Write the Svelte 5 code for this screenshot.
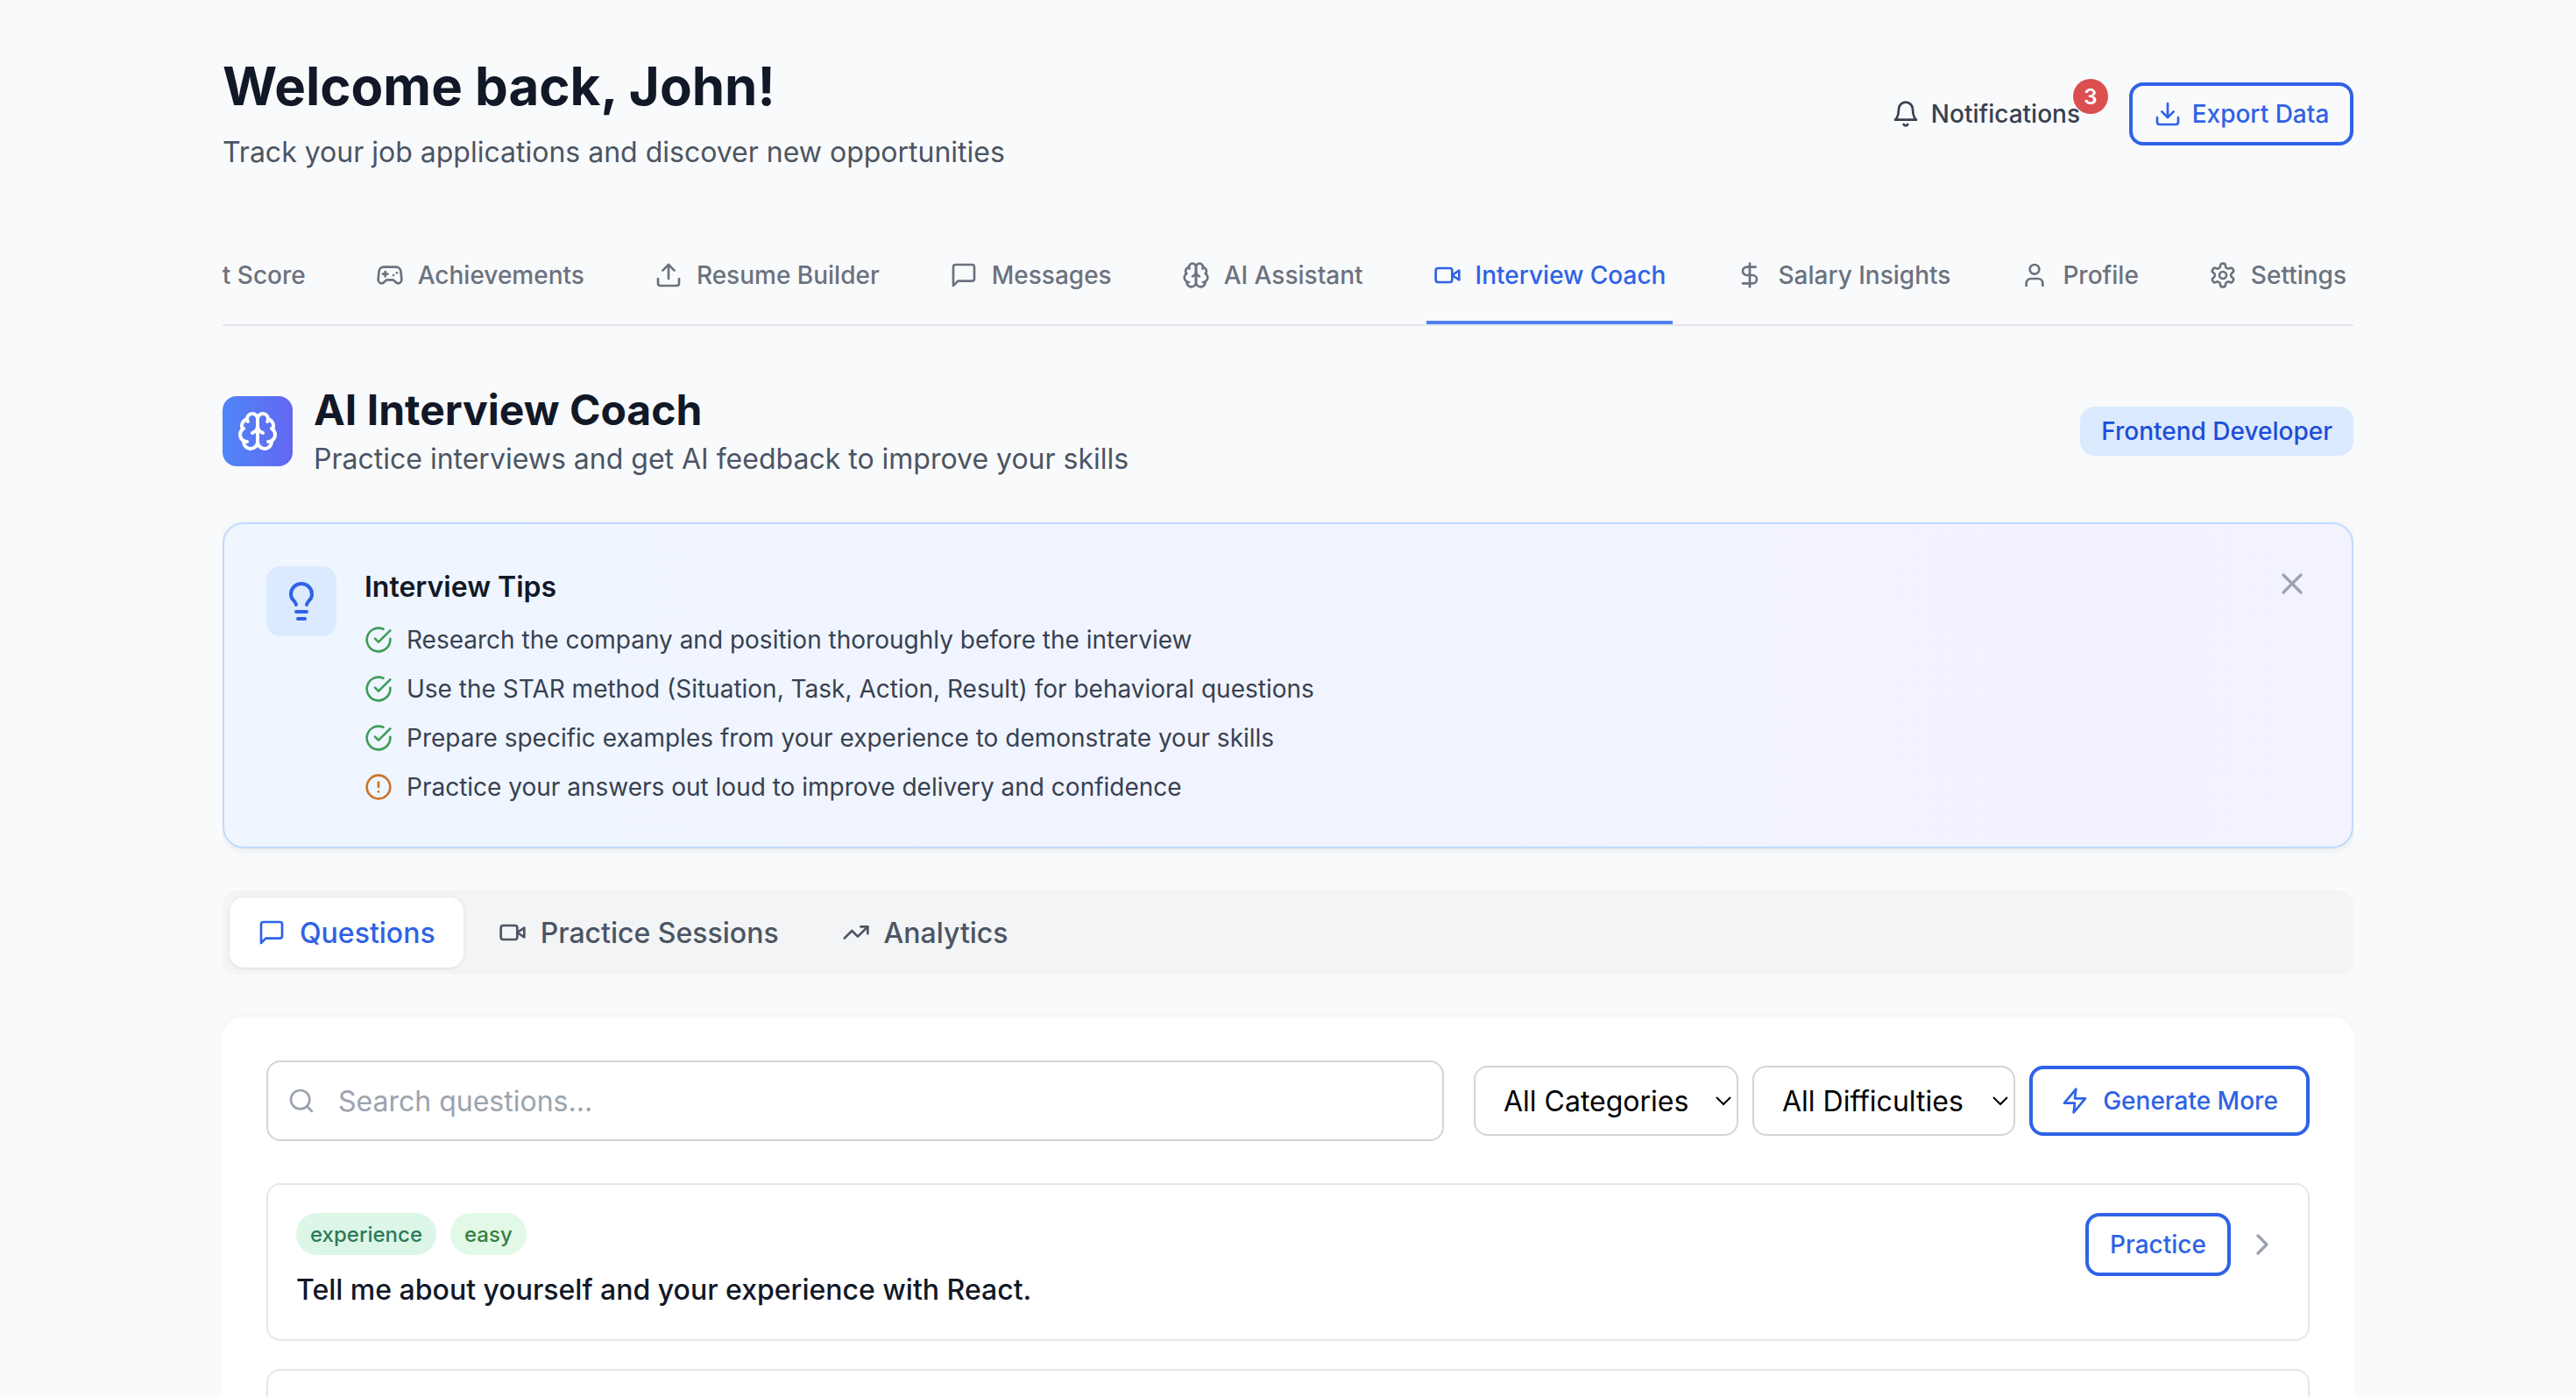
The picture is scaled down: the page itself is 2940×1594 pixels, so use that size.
<script>
  const icons = {
    bell: '<path d="M6 8a6 6 0 0 1 12 0c0 7 3 9 3 9H3s3-2 3-9"/><path d="M10.3 21a1.94 1.94 0 0 0 3.4 0"/>',
    download: '<path d="M21 15v4a2 2 0 0 1-2 2H5a2 2 0 0 1-2-2v-4"/><polyline points="7 10 12 15 17 10"/><line x1="12" y1="15" x2="12" y2="3"/>',
    upload: '<path d="M21 15v4a2 2 0 0 1-2 2H5a2 2 0 0 1-2-2v-4"/><polyline points="17 8 12 3 7 8"/><line x1="12" y1="3" x2="12" y2="15"/>',
    message: '<path d="M21 15a2 2 0 0 1-2 2H7l-4 4V5a2 2 0 0 1 2-2h14a2 2 0 0 1 2 2z"/>',
    gamepad: '<line x1="6" y1="11" x2="10" y2="11"/><line x1="8" y1="9" x2="8" y2="13"/><line x1="15" y1="12" x2="15.01" y2="12"/><line x1="18" y1="10" x2="18.01" y2="10"/><path d="M17.32 5H6.68a4 4 0 0 0-3.978 3.59c-.006.052-.01.101-.017.152C2.604 9.416 2 14.456 2 16a3 3 0 0 0 3 3c1 0 1.5-.5 2-1l1.414-1.414A2 2 0 0 1 9.828 16h4.344a2 2 0 0 1 1.414.586L17 18c.5.5 1 1 2 1a3 3 0 0 0 3-3c0-1.545-.604-6.584-.685-7.258-.007-.05-.011-.1-.017-.151A4 4 0 0 0 17.32 5z"/>',
    brain: '<path d="M12 5a3 3 0 1 0-5.997.125 4 4 0 0 0-2.526 5.77 4 4 0 0 0 .556 6.588A4 4 0 1 0 12 18Z"/><path d="M12 5a3 3 0 1 1 5.997.125 4 4 0 0 1 2.526 5.77 4 4 0 0 1-.556 6.588A4 4 0 1 1 12 18Z"/><path d="M15 13a4.5 4.5 0 0 1-3-4 4.5 4.5 0 0 1-3 4"/><path d="M17.599 6.5a3 3 0 0 0 .399-1.375"/><path d="M6.003 5.125A3 3 0 0 0 6.401 6.5"/><path d="M3.477 10.896a4 4 0 0 1 .585-.396"/><path d="M19.938 10.5a4 4 0 0 1 .585.396"/><path d="M6 18a4 4 0 0 1-1.967-.516"/><path d="M19.967 17.484A4 4 0 0 1 18 18"/>',
    video: '<path d="m22 8-6 4 6 4V8Z"/><rect x="2" y="6" width="14" height="12" rx="2"/>',
    dollar: '<line x1="12" y1="2" x2="12" y2="22"/><path d="M17 5H9.5a3.5 3.5 0 0 0 0 7h5a3.5 3.5 0 0 1 0 7H6"/>',
    user: '<path d="M19 21v-2a4 4 0 0 0-4-4H9a4 4 0 0 0-4 4v2"/><circle cx="12" cy="7" r="4"/>',
    settings: '<path d="M12.22 2h-.44a2 2 0 0 0-2 2v.18a2 2 0 0 1-1 1.73l-.43.25a2 2 0 0 1-2 0l-.15-.08a2 2 0 0 0-2.73.73l-.22.38a2 2 0 0 0 .73 2.73l.15.1a2 2 0 0 1 1 1.72v.51a2 2 0 0 1-1 1.74l-.15.09a2 2 0 0 0-.73 2.73l.22.38a2 2 0 0 0 2.73.73l.15-.08a2 2 0 0 1 2 0l.43.25a2 2 0 0 1 1 1.73V20a2 2 0 0 0 2 2h.44a2 2 0 0 0 2-2v-.18a2 2 0 0 1 1-1.73l.43-.25a2 2 0 0 1 2 0l.15.08a2 2 0 0 0 2.73-.73l.22-.39a2 2 0 0 0-.73-2.73l-.15-.08a2 2 0 0 1-1-1.74v-.5a2 2 0 0 1 1-1.74l.15-.09a2 2 0 0 0 .73-2.73l-.22-.38a2 2 0 0 0-2.73-.73l-.15.08a2 2 0 0 1-2 0l-.43-.25a2 2 0 0 1-1-1.73V4a2 2 0 0 0-2-2z"/><circle cx="12" cy="12" r="3"/>',
    bulb: '<path d="M15 14c.2-1 .7-1.7 1.5-2.5 1-.9 1.5-2.2 1.5-3.5A6 6 0 0 0 6 8c0 1 .2 2.2 1.5 3.5.7.7 1.3 1.5 1.5 2.5"/><path d="M9 18h6"/><path d="M10 22h4"/>',
    check: '<path d="M22 11.08V12a10 10 0 1 1-5.93-9.14"/><polyline points="22 4 12 14.01 9 11.01"/>',
    alert: '<circle cx="12" cy="12" r="10"/><line x1="12" y1="8" x2="12" y2="12"/><line x1="12" y1="16" x2="12.01" y2="16"/>',
    x: '<path d="M18 6 6 18"/><path d="m6 6 12 12"/>',
    trend: '<polyline points="22 7 13.5 15.5 8.5 10.5 2 17"/><polyline points="16 7 22 7 22 13"/>',
    search: '<circle cx="11" cy="11" r="8"/><path d="m21 21-4.3-4.3"/>',
    zap: '<polygon points="13 2 3 14 12 14 11 22 21 10 12 10 13 2"/>',
    chevron: '<path d="m9 18 6-6-6-6"/>'
  };

  const navTabs = [
    { label: 'Talent Score', icon: 'trend' },
    { label: 'Achievements', icon: 'gamepad' },
    { label: 'Resume Builder', icon: 'upload' },
    { label: 'Messages', icon: 'message' },
    { label: 'AI Assistant', icon: 'brain' },
    { label: 'Interview Coach', icon: 'video', active: true },
    { label: 'Salary Insights', icon: 'dollar' },
    { label: 'Profile', icon: 'user' },
    { label: 'Settings', icon: 'settings' }
  ];

  const tips = [
    { text: 'Research the company and position thoroughly before the interview', icon: 'check', tone: 'ok' },
    { text: 'Use the STAR method (Situation, Task, Action, Result) for behavioral questions', icon: 'check', tone: 'ok' },
    { text: 'Prepare specific examples from your experience to demonstrate your skills', icon: 'check', tone: 'ok' },
    { text: 'Practice your answers out loud to improve delivery and confidence', icon: 'alert', tone: 'warn' }
  ];

  const subTabs = [
    { label: 'Questions', icon: 'message', active: true },
    { label: 'Practice Sessions', icon: 'video' },
    { label: 'Analytics', icon: 'trend' }
  ];
</script>

{#snippet icon(name, cls)}
  <svg class={cls} viewBox="0 0 24 24" fill="none" stroke="currentColor" stroke-width="2" stroke-linecap="round" stroke-linejoin="round">{@html icons[name]}</svg>
{/snippet}

<div class="page">
  <header class="top">
    <div>
      <h1>Welcome back, John!</h1>
      <p class="lead">Track your job applications and discover new opportunities</p>
    </div>
    <div class="top-actions">
      <button class="notif">
        {@render icon('bell', 'i32')}
        <span>Notifications</span>
        <span class="badge">3</span>
      </button>
      <button class="outline export">
        {@render icon('download', 'i32')}
        Export Data
      </button>
    </div>
  </header>

  <nav class="nav">
    {#each navTabs as t}
      <div class="nav-item" class:active={t.active}>
        {@render icon(t.icon, 'i32')}
        <span>{t.label}</span>
      </div>
    {/each}
  </nav>

  <section class="coach-head">
    <div class="coach-title">
      <div class="brain">{@render icon('brain', 'i48')}</div>
      <div class="coach-text">
        <h2>AI Interview Coach</h2>
        <p class="coach-sub">Practice interviews and get AI feedback to improve your skills</p>
      </div>
    </div>
    <span class="role">Frontend Developer</span>
  </section>

  <section class="tips">
    <div class="bulb">{@render icon('bulb', 'i48')}</div>
    <div class="tips-body">
      <h3>Interview Tips</h3>
      <ul>
        {#each tips as tip}
          <li>
            <span class={tip.tone}>{@render icon(tip.icon, 'i32')}</span>
            {tip.text}
          </li>
        {/each}
      </ul>
    </div>
    <span class="close">{@render icon('x', 'i40')}</span>
  </section>

  <div class="subtabs">
    {#each subTabs as t}
      <div class="subtab" class:active={t.active}>
        {@render icon(t.icon, 'i32')}
        <span>{t.label}</span>
      </div>
    {/each}
  </div>

  <section class="panel">
    <div class="filters">
      <label class="search">
        {@render icon('search', 'i32')}
        <input placeholder="Search questions..." />
      </label>
      <select class="sel-cat"><option>All Categories</option></select>
      <select class="sel-dif"><option>All Difficulties</option></select>
      <button class="outline generate">
        {@render icon('zap', 'i32')}
        Generate More
      </button>
    </div>

    <article class="question">
      <div>
        <div class="pills">
          <span class="pill exp">experience</span>
          <span class="pill easy">easy</span>
        </div>
        <p class="q-text">Tell me about yourself and your experience with React.</p>
      </div>
      <div class="q-actions">
        <button class="outline practice">Practice</button>
        <span class="chev">{@render icon('chevron', 'i40')}</span>
      </div>
    </article>
    <article class="question empty"></article>
  </section>
</div>

<style>
  :global(body) {
    margin: 0;
    background: #f9fafb;
    font-family: Inter, "Liberation Sans", sans-serif;
    overflow: hidden;
  }
  * { box-sizing: border-box; }
  h1, h2, h3, p, ul { margin: 0; padding: 0; }
  button { font-family: inherit; background: none; cursor: pointer; }
  svg { display: block; flex: none; }
  .i32 { width: 32px; height: 32px; }
  .i40 { width: 40px; height: 40px; }
  .i48 { width: 48px; height: 48px; }

  .page {
    width: 2432px;
    margin: 0 auto;
    padding-top: 62px;
    height: 1594px;
    overflow: hidden;
  }

  .top { display: flex; justify-content: space-between; align-items: center; }
  h1 { font-size: 60px; line-height: 72px; font-weight: 700; color: #111827; }
  .lead { font-size: 32px; line-height: 56px; color: #4b5563; margin-top: 12px; }
  .top-actions { display: flex; align-items: center; gap: 32px; margin-bottom: 4px; }
  .notif {
    position: relative;
    display: flex;
    align-items: center;
    gap: 13px;
    height: 72px;
    padding: 0 24px;
    border: 0;
    font-size: 28px;
    font-weight: 500;
    color: #374151;
  }
  .badge {
    position: absolute;
    top: -4px;
    right: -8px;
    width: 40px;
    height: 40px;
    border-radius: 50%;
    background: #dc4f4f;
    color: #fff;
    font-size: 24px;
    font-weight: 600;
    display: flex;
    align-items: center;
    justify-content: center;
  }
  .outline {
    display: flex;
    align-items: center;
    justify-content: center;
    border: 4px solid #2f62e6;
    border-radius: 16px;
    color: #2f62e6;
    font-weight: 500;
    font-size: 28px;
  }
  .export { width: 256px; height: 72px; gap: 12px; }

  .nav {
    display: flex;
    justify-content: flex-end;
    gap: 64px;
    margin-top: 60px;
    border-bottom: 2px solid #e5e7eb;
    overflow: hidden;
  }
  .nav-item {
    display: flex;
    align-items: center;
    gap: 16px;
    flex: none;
    padding: 32px 8px;
    font-size: 28px;
    line-height: 40px;
    font-weight: 500;
    color: #6b7280;
    border-bottom: 4px solid transparent;
  }
  .nav-item.active { color: #2f62e6; border-bottom-color: #4f80ee; }

  .coach-head {
    display: flex;
    justify-content: space-between;
    align-items: center;
    margin-top: 64px;
  }
  .coach-title { display: flex; align-items: center; gap: 24px; }
  .coach-text { padding-top: 4px; }
  .brain {
    width: 80px;
    height: 80px;
    border-radius: 16px;
    background: linear-gradient(90deg, #4f86f7, #6366f1);
    color: #fff;
    display: flex;
    align-items: center;
    justify-content: center;
  }
  h2 { font-size: 48px; line-height: 56px; font-weight: 700; color: #111827; }
  .coach-sub { font-size: 32px; line-height: 48px; color: #4b5563; margin-top: 4px; }
  .role {
    height: 56px;
    display: flex;
    align-items: center;
    padding: 0 24px;
    border-radius: 16px;
    background: #dbeafe;
    color: #1d4ed8;
    font-size: 28px;
    font-weight: 500;
  }

  .tips {
    position: relative;
    display: flex;
    gap: 32px;
    margin-top: 48px;
    padding: 48px;
    height: 372px;
    border: 2px solid #bfdbfe;
    border-radius: 24px;
    background: linear-gradient(90deg, #eff6ff, #f3f2ff);
    box-shadow: 0 2px 8px rgba(0, 0, 0, 0.08);
  }
  .bulb {
    width: 80px;
    height: 80px;
    flex: none;
    border-radius: 16px;
    background: #dbeafe;
    color: #2f62e6;
    display: flex;
    align-items: center;
    justify-content: center;
  }
  h3 { font-size: 32px; line-height: 48px; font-weight: 600; color: #111827; }
  .tips ul { list-style: none; margin-top: 8px; }
  .tips li {
    display: flex;
    align-items: center;
    gap: 16px;
    height: 56px;
    font-size: 28px;
    color: #374151;
  }
  .ok { color: #3f9d58; }
  .warn { color: #c9752a; }
  .close { position: absolute; top: 48px; right: 48px; color: #9ca3af; }

  .subtabs {
    display: flex;
    gap: 8px;
    margin-top: 48px;
    padding: 8px;
    height: 96px;
    border-radius: 16px;
    background: #f3f4f6;
  }
  .subtab {
    display: flex;
    align-items: center;
    gap: 16px;
    padding: 0 32px;
    border-radius: 16px;
    font-size: 32px;
    font-weight: 500;
    color: #4b5563;
  }
  .subtab.active {
    background: #fff;
    color: #2f62e6;
    box-shadow: 0 1px 4px rgba(0, 0, 0, 0.1);
  }

  .panel {
    margin-top: 48px;
    padding: 50px 50px 48px;
    border-radius: 24px;
    background: #fff;
    box-shadow: 0 2px 8px rgba(0, 0, 0, 0.06);
  }
  .filters { display: flex; align-items: center; gap: 16px; }
  .search {
    display: flex;
    align-items: center;
    gap: 24px;
    width: 1344px;
    height: 92px;
    margin-right: 18px;
    padding: 0 22px;
    border: 2px solid #d1d5db;
    border-radius: 16px;
    color: #9ca3af;
  }
  .search input {
    flex: 1;
    border: 0;
    outline: 0;
    font: 400 32px Inter, "Liberation Sans", sans-serif;
    background: none;
  }
  .search input::placeholder { color: #9ca3af; }
  select {
    zoom: 2;
    height: 40px;
    padding: 0 8px 0 12px;
    border: 1px solid #d1d5db;
    border-radius: 8px;
    background: #fff;
    font: 400 16px Inter, "Liberation Sans", sans-serif;
    color: #000;
  }
  .sel-cat { width: 151px; }
  .sel-dif { width: 150px; }
  .generate { width: 320px; height: 80px; gap: 16px; font-size: 28px; }

  .question {
    display: flex;
    justify-content: space-between;
    margin-top: 48px;
    padding: 32px;
    height: 180px;
    border: 2px solid #e5e7eb;
    border-radius: 16px;
  }
  .question.empty { margin-top: 32px; }
  .pills { display: flex; gap: 16px; }
  .pill {
    height: 48px;
    display: flex;
    align-items: center;
    padding: 0 16px;
    border-radius: 24px;
    font-size: 24px;
    font-weight: 500;
  }
  .exp { background: #dcf7e7; color: #2f7a57; }
  .easy { background: #e1f9e6; color: #387f43; }
  .q-text { margin-top: 16px; font-size: 32px; line-height: 48px; font-weight: 500; color: #111827; }
  .q-actions { display: flex; align-items: flex-start; gap: 16px; }
  .practice { width: 166px; height: 72px; font-size: 28px; }
  .chev { color: #9ca3af; margin-top: 16px; }
</style>
